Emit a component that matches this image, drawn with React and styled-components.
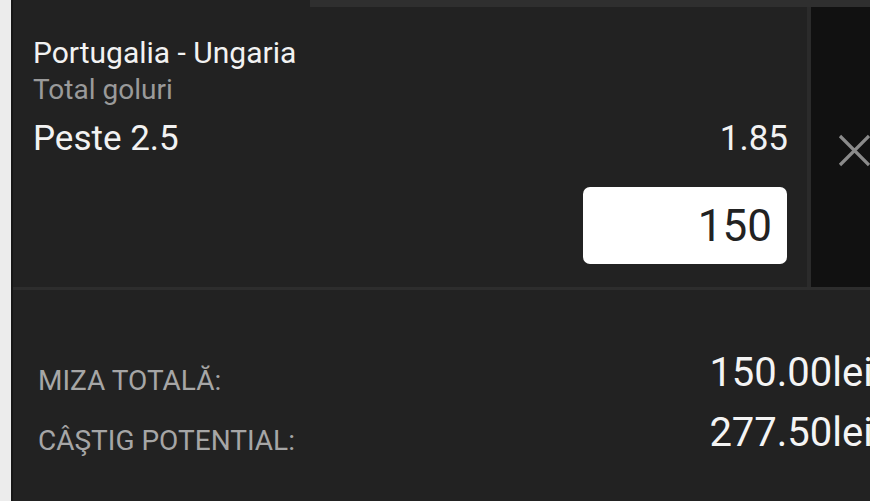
import React from 'react';
import styled, { createGlobalStyle } from 'styled-components';

const GlobalStyle = createGlobalStyle`
  html, body {
    margin: 0;
    padding: 0;
    background: #ececec;
    overflow: hidden;
    font-family: Roboto, "Noto Sans", sans-serif;
  }
`;

function CloseIcon() {
  return (
    <svg width="33" height="33" viewBox="0 0 33 33">
      <path
        d="M2 2 L31 31 M31 2 L2 31"
        stroke="#8b8b8b"
        strokeWidth="3.2"
        fill="none"
      />
    </svg>
  );
}

function App() {
  return (
    <>
      <GlobalStyle />
      <Page>
        <Slip>
          <TopStrip>
            <StripTab />
          </TopStrip>

          <BetRow>
            <Selection>
              <Match>Portugalia - Ungaria</Match>
              <Market>Total goluri</Market>
              <OutcomeLine>
                <Outcome>Peste 2.5</Outcome>
                <Odds>1.85</Odds>
              </OutcomeLine>
              <StakeInput defaultValue="150" />
            </Selection>
            <CloseCell>
              <CloseIcon />
            </CloseCell>
          </BetRow>

          <Summary>
            <SummaryRow>
              <Label>MIZA TOTALĂ:</Label>
              <Value>150.00lei</Value>
            </SummaryRow>
            <SummaryRow>
              <Label>CÂŞTIG POTENTIAL:</Label>
              <Value>277.50lei</Value>
            </SummaryRow>
          </Summary>
        </Slip>
      </Page>
    </>
  );
}

const Page = styled.div`
  height: 501px;
  padding-left: 11px;
  display: flex;
`;

const Slip = styled.div`
  width: 884px;
  flex-shrink: 0;
  border-left: 2px solid #171717;
  background: #222222;
  display: flex;
  flex-direction: column;
`;

const TopStrip = styled.div`
  height: 7px;
  display: flex;
  padding-left: 297px;
`;

const StripTab = styled.div`
  flex: 1;
  background: #2f2f2f;
`;

const BetRow = styled.div`
  height: 280px;
  display: flex;
  border-bottom: 3px solid #2d2d2d;
`;

const Selection = styled.div`
  flex: 1;
  padding: 29px 20px 0 20px;
  display: flex;
  flex-direction: column;
  color: #f2f2f2;
`;

const Match = styled.div`
  font-size: 30px;
  line-height: 34px;
`;

const Market = styled.div`
  font-size: 28px;
  line-height: 30px;
  margin-top: 5px;
  color: #9a9a9a;
`;

const OutcomeLine = styled.div`
  display: flex;
  justify-content: space-between;
  align-items: baseline;
  margin-top: 14px;
  font-size: 35px;
  line-height: 40px;
`;

const Outcome = styled.span``;

const Odds = styled.span`
  margin-right: -1px;
`;

const StakeInput = styled.input.attrs({ readOnly: true })`
  align-self: flex-end;
  margin-top: 28px;
  width: 204px;
  height: 77px;
  box-sizing: border-box;
  border: none;
  outline: none;
  border-radius: 7px;
  background: #ffffff;
  padding: 0 15px 0 0;
  text-align: right;
  font-family: Roboto, sans-serif;
  font-size: 44px;
  color: #222222;
`;

const CloseCell = styled.div`
  width: 86px;
  border-left: 4px solid #2b2b2b;
  background: #111111;
  display: flex;
  justify-content: center;
  align-items: flex-start;
  padding-top: 127px;
`;

const Summary = styled.div`
  flex: 1;
  padding: 53px 24px 0 25px;
  display: flex;
  flex-direction: column;
`;

const SummaryRow = styled.div`
  height: 60px;
  display: flex;
  justify-content: space-between;
  align-items: flex-start;
`;

const Label = styled.span`
  padding-top: 8px;
  font-size: 28px;
  line-height: 60px;
  color: #a6a6a6;
`;

const Value = styled.span`
  font-size: 40px;
  line-height: 60px;
  color: #f4f4f4;
`;

export default App;
